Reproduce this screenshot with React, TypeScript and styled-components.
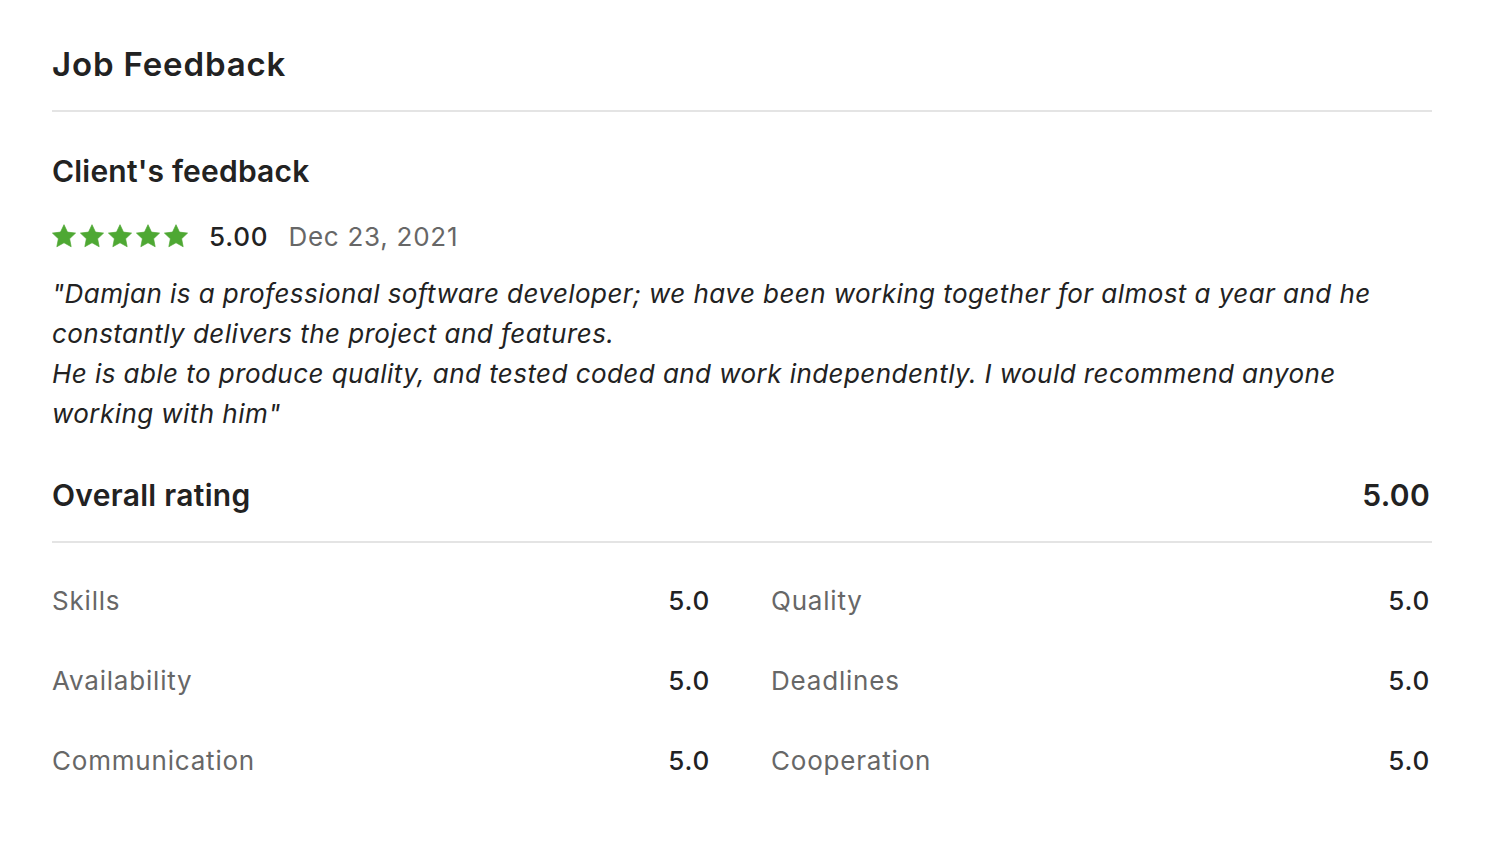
import React from "react";
import styled, { createGlobalStyle } from "styled-components";

const Global = createGlobalStyle`
  html, body { margin: 0; padding: 0; background: #ffffff; }
  body { font-family: Inter, "Liberation Sans", Arial, sans-serif; color: #222222; }
`;

const Page = styled.main`
  width: 1380px;
  margin-left: 52px;
  padding-top: 44px;
`;

const Title = styled.h1`
  margin: 0;
  font-size: 33px;
  line-height: 40px;
  font-weight: 600;
  letter-spacing: 0.85px;
  color: #222222;
`;

const Divider = styled.hr<{ $top: number }>`
  border: none;
  height: 2px;
  background: #e4e4e4;
  margin: ${(p) => p.$top}px 0 0 0;
`;

const SubTitle = styled.h2`
  margin: 39px 0 0 0;
  font-size: 30px;
  line-height: 40px;
  font-weight: 600;
  letter-spacing: 0.2px;
  color: #222222;
`;

const MetaRow = styled.div`
  display: flex;
  align-items: center;
  height: 32px;
  margin-top: 29px;
`;

const Stars = styled.div`
  display: flex;
  gap: 4px;
  margin-right: 21px;
`;

const Score = styled.span`
  font-size: 26px;
  font-weight: 500;
  letter-spacing: 0.8px;
  color: #222222;
  margin-right: 20px;
`;

const DateText = styled.span`
  font-size: 26px;
  letter-spacing: 0.75px;
  color: #676767;
`;

const Quote = styled.p`
  margin: 22px 0 0 0;
  font-size: 26px;
  line-height: 40px;
  font-style: italic;
  letter-spacing: 0.44px;
  color: #222222;
  white-space: pre-line;
`;

const OverallRow = styled.div`
  display: flex;
  justify-content: space-between;
  align-items: center;
  margin-top: 41px;
  height: 40px;
  padding-right: 2px;
`;

const OverallText = styled.span`
  font-size: 30px;
  font-weight: 600;
  letter-spacing: 0.3px;
  color: #222222;
`;

const Grid = styled.div`
  display: grid;
  grid-template-columns: 658px 659px;
  column-gap: 61px;
  margin-top: 17px;
  padding-right: 2px;
`;

const Row = styled.div`
  display: flex;
  justify-content: space-between;
  align-items: center;
  height: 80px;
`;

const Label = styled.span`
  font-size: 26px;
  letter-spacing: 0.8px;
  color: #676767;
`;

const Value = styled.span`
  font-size: 26px;
  font-weight: 500;
  letter-spacing: 0.8px;
  color: #222222;
`;

const Star = () => (
  <svg width="24" height="24" viewBox="-0.4 -0.4 24.8 24.8" aria-hidden="true">
    <path
      d="M12 0.3 L15.59 7.97 L23.98 9.01 L17.8 14.78 L19.41 23.09 L12 19 L4.59 23.09 L6.2 14.78 L0.02 9.01 L8.41 7.97 Z"
      fill="#4ea833"
      stroke="#4ea833"
      strokeWidth="0.7"
      strokeLinejoin="round"
    />
  </svg>
);

const ratings: [string, string][] = [
  ["Skills", "5.0"],
  ["Quality", "5.0"],
  ["Availability", "5.0"],
  ["Deadlines", "5.0"],
  ["Communication", "5.0"],
  ["Cooperation", "5.0"],
];

export default function App() {
  return (
    <>
      <Global />
      <Page>
        <Title>Job Feedback</Title>
        <Divider $top={26} />
        <SubTitle>Client's feedback</SubTitle>
        <MetaRow>
          <Stars>
            {[0, 1, 2, 3, 4].map((i) => (
              <Star key={i} />
            ))}
          </Stars>
          <Score>5.00</Score>
          <DateText>Dec 23, 2021</DateText>
        </MetaRow>
        <Quote>
          {`"Damjan is a professional software developer; we have been working together for almost a year and he constantly delivers the project and features.
He is able to produce quality, and tested coded and work independently. I would recommend anyone working with him"`}
        </Quote>
        <OverallRow>
          <OverallText>Overall rating</OverallText>
          <OverallText>5.00</OverallText>
        </OverallRow>
        <Divider $top={26} />
        <Grid>
          {ratings.map(([label, value]) => (
            <Row key={label}>
              <Label>{label}</Label>
              <Value>{value}</Value>
            </Row>
          ))}
        </Grid>
      </Page>
    </>
  );
}
